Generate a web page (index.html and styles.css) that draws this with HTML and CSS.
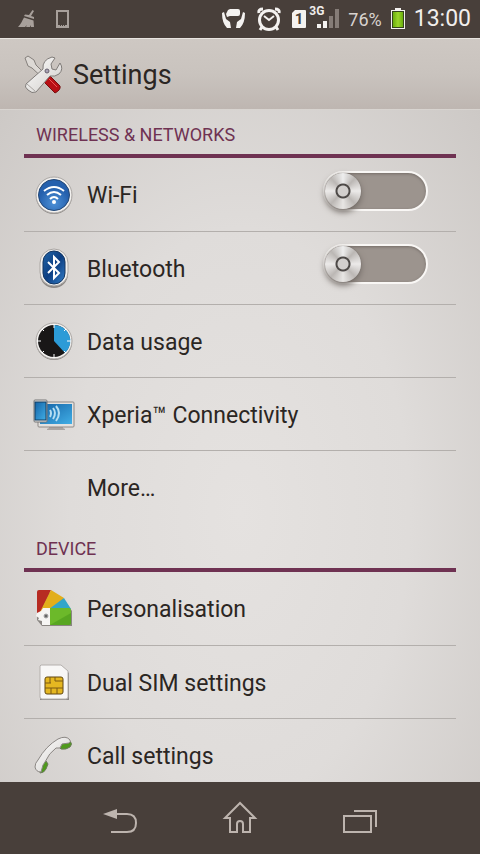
FILE: index.html
```html
<!DOCTYPE html>
<html lang="en">
<head>
    <meta charset="UTF-8">
    <meta name="viewport" content="width=device-width, initial-scale=1.0">
    <title>Settings</title>
    <link rel="stylesheet" href="styles.css">
</head>
<body>
    <div class="status-bar">
        <svg class="broom" width="18" height="18" viewBox="0 0 18 18">
            <path d="M14.500 0l1.500 1-3 5 3 1v2L6 6l1-1.500 4 .5z"/>
            <path d="M6 7.500l9.500 3L16 17h-3v-2l-1 2H8l1-2-2 2H0c3-3 4-6 6-9.500z"/>
        </svg>
        <svg width="14" height="18" viewBox="0 0 14 18">
            <path class="phone-outline" d="M1 1h11v16H1z"/>
            <path class="broom" d="M2 15h2v1H2zM5 15h1v1H5zM7 15h1v1H7zM9 15h2v1H9z"/>
        </svg>
        <div class="status-right">
            <svg width="26" height="20" viewBox="0 0 26 20">
                <path d="M7 1l2-1h8q2 0 2 2v3q0 2-2 2H9L6 8 5 5z"/>
                <path d="M1 4l2-1 2 7 4 3 1 6H6Q1 14 1 4zM24 4l-2-1-2 7-4 3-1 6h4q5-5 5-15z"/>
            </svg>
            <svg class="alarm" width="24" height="25" viewBox="0 0 24 25">
                <circle cx="12" cy="13" r="9.500"/>
                <path d="M2 6q-1-4 4-4M22 6q1-4-4-4M5 20l-2 3M19 20l2 3"/>
                <path class="hands" d="M7 9l5 4 5-4"/>
            </svg>
            <svg width="16" height="20" viewBox="0 0 16 20">
                <path d="M4 1h10q1 0 1 1v16q0 1-1 1H2q-1 0-1-1V4z"/>
                <text class="digit" x="8" y="15" text-anchor="middle">1</text>
            </svg>
            <div class="signal">
                <span>3G</span>
                <svg width="24" height="20" viewBox="0 0 24 20">
                    <path d="M1 15h4v4H1zM7 12h4v7H7z"/>
                    <path class="weak" d="M13 7h4v12h-4zM19 0h4v19h-4z"/>
                </svg>
            </div>
            <span class="percent">76%</span>
            <svg width="16" height="22" viewBox="0 0 16 22">
                <defs>
                    <linearGradient id="charge"><stop stop-color="#6aae0c"/><stop offset=".5" stop-color="#9bd72a"/><stop offset="1" stop-color="#6aae0c"/></linearGradient>
                </defs>
                <path d="M5 0h6v2h4v19H1V2h4z"/>
                <path fill="#35451c" d="M2 3h12v17H2z"/>
                <path fill="url(#charge)" d="M3 4h10v15H3z"/>
            </svg>
            <span class="clock">13:00</span>
        </div>
    </div>

    <header class="title-bar">
        <svg width="40" height="40" viewBox="0 0 40 40">
            <defs>
                <linearGradient id="steel" x1="0" y1="0" x2="1" y2="1"><stop stop-color="#fff"/><stop offset="1" stop-color="#cfccc9"/></linearGradient>
            </defs>
            <path fill="#ddd9d5" stroke="#85807c" d="M2 3l3-2 6 4 2 5 12 12-3 3L9 13l-4-2z"/>
            <path fill="#b80f14" stroke="#770f10" d="M21 27l6-6 10 10q1 4-5 7z"/>
            <path stroke="#ed5553" d="M26 24l8 8"/>
            <path fill="url(#steel)" stroke="#807c79" d="M20 14q-1-9 9-12l3 1-4 6 1 5 4 1 4-7q4 6-1 11-4 3-9 2L13 37q-4 2-8-2-4-3-2-6z"/>
            <path fill="none" stroke="#aaa5a2" d="M4 29l8 7"/>
            <circle cx="24" cy="16" r="2" fill="#a9a3b5" stroke="#65606d"/>
        </svg>
        <h1>Settings</h1>
    </header>

    <main class="settings">
        <section>
            <h2>Wireless &amp; networks</h2>
            <ul>
                <li class="row">
                    <svg width="42" height="42" viewBox="0 0 42 42">
                        <defs>
                            <radialGradient id="blue" cy=".75"><stop stop-color="#4d91d7"/><stop offset="1" stop-color="#2560ad"/></radialGradient>
                        </defs>
                        <circle cx="21" cy="22" r="18" fill="#8d8986"/>
                        <circle cx="21" cy="21" r="18" fill="#f2f0ee" stroke="#aaa6a3"/>
                        <circle cx="21" cy="21" r="15.500" fill="url(#blue)" stroke="#234775"/>
                        <g class="wave">
                            <path d="M11 17q10-8 20 0M14 21q7-6 14 0M17 25q4-4 8 0"/>
                        </g>
                        <circle cx="21" cy="28" r="2" fill="#fff"/>
                    </svg>
                    <label for="wifi">Wi-Fi</label>
                    <input type="checkbox" class="switch" id="wifi">
                </li>
                <li class="row">
                    <svg width="42" height="42" viewBox="0 0 42 42">
                        <defs>
                            <linearGradient id="navy" x1="0" x2="1" y2="1"><stop stop-color="#2265a8"/><stop offset=".5" stop-color="#0c3e82"/><stop offset="1" stop-color="#3580ca"/></linearGradient>
                        </defs>
                        <rect x="7" y="4" width="28" height="37" rx="14" fill="#8d8986"/>
                        <rect x="7" y="2" width="28" height="37" rx="14" fill="#f2f0ee" stroke="#aaa6a3"/>
                        <rect x="10" y="4" width="22" height="33" rx="11" fill="url(#navy)" stroke="#123561"/>
                        <path fill="none" stroke="#fff" stroke-width="2" d="M15 15l11 11-5 5V10l5 5-11 11"/>
                    </svg>
                    <label for="bluetooth">Bluetooth</label>
                    <input type="checkbox" class="switch" id="bluetooth">
                </li>
                <li>
                    <a class="row" href="#data">
                        <svg width="42" height="42" viewBox="0 0 42 42">
                            <circle cx="21" cy="22" r="18" fill="#8d8986"/>
                            <circle cx="21" cy="21" r="18" fill="#f2f0ee" stroke="#aaa6a3"/>
                            <circle cx="21" cy="21" r="16" fill="#191717"/>
                            <path fill="#2c9bd7" d="M21 21V5a16 16 0 0 1 11 28z"/>
                            <path stroke="#fff" d="M21 4v4M21 34v4M4 21h4M34 21h4M9 9l2 2M33 9l-2 2M9 33l2-2M33 33l-2-2"/>
                        </svg>
                        Data usage
                    </a>
                </li>
                <li>
                    <a class="row" href="#connectivity">
                        <svg width="42" height="42" viewBox="0 0 42 42">
                            <defs>
                                <linearGradient id="screen" x2="1" y2="1"><stop stop-color="#1463a7"/><stop offset="1" stop-color="#41aee5"/></linearGradient>
                            </defs>
                            <path fill="#aaa5a2" d="M16 32h14v3l2 1v1H14v-1l2-1z"/>
                            <rect x="5" y="9" width="36" height="25" rx="1" fill="#e3e1df" stroke="#8d8986"/>
                            <rect x="7" y="11" width="32" height="20" fill="url(#screen)"/>
                            <rect x="1" y="7" width="13" height="22" rx="1" fill="#e5e3e2" stroke="#777"/>
                            <rect x="2" y="9" width="11" height="18" fill="url(#screen)" stroke="#123e63"/>
                            <g class="wave thin">
                                <path d="M17 17q2 3 0 7M20 15q4 5 0 11M23 13q6 7 0 15"/>
                            </g>
                        </svg>
                        Xperia™ Connectivity
                    </a>
                </li>
                <li>
                    <a class="row no-icon" href="#more">More…</a>
                </li>
            </ul>
        </section>

        <section>
            <h2>Device</h2>
            <ul>
                <li>
                    <a class="row" href="#personalisation">
                        <svg width="42" height="42" viewBox="0 0 42 42">
                            <path fill="#8a8682" d="M4 6h14l12 5 9 13v15H9l-5-6z"/>
                            <path fill="#b72b22" d="M4 5q0-2 2-2h12L8 24l-4 4z"/>
                            <path fill="#e2ae1b" d="M18 3l13 8-17 14H7z"/>
                            <path fill="#32a6c9" d="M31 11l7 11-21 4-5-1z"/>
                            <path fill="#6cb92a" d="M17 21h19q2 0 2 3v12q0 2-2 2H17z"/>
                            <path fill="#3d8a13" d="M17 38l21-12v10q0 2-2 2z" opacity=".4"/>
                            <path fill="#f6f5f3" d="M4 26l4-2 2-3h7v17H9v-4l-4-1 1-2-3-2z"/>
                            <circle cx="13" cy="29" r="2" fill="#666" stroke="#aaa"/>
                        </svg>
                        Personalisation
                    </a>
                </li>
                <li>
                    <a class="row" href="#dual-sim">
                        <svg width="42" height="42" viewBox="0 0 42 42">
                            <path fill="#8d8986" d="M7 6h22l7 6v27H7z"/>
                            <path fill="#f8f7f6" stroke="#b4b0ad" d="M8 4h20l7 6v26q0 2-2 2H9q-2 0-2-2V5z"/>
                            <rect x="12" y="16" width="18" height="17" rx="2" fill="#e5b721" stroke="#614710"/>
                            <path fill="none" stroke="#7a5914" d="M12 22h6M17 16v6M22 16v4h8M12 27h18M18 27v6M24 27v6"/>
                        </svg>
                        Dual SIM settings
                    </a>
                </li>
                <li>
                    <a class="row" href="#call">
                        <svg width="42" height="42" viewBox="0 0 42 42">
                            <path fill="#4f9a1c" stroke="#6c7a5a" d="M27 14l1-4 9-3q3 3 0 6-4 3-9 2zM7 39l2-10 4-2 2 3-2 5q-2 4-6 4z"/>
                            <path fill="url(#steel)" stroke="#8b8784" d="M2 33q0-4 3-7Q13 12 25 5q8-4 12 1 1 2-1 3l-7 1-2 4-4 0Q16 19 12 28l-2 3-2 7q-5 0-6-5z"/>
                        </svg>
                        Call settings
                    </a>
                </li>
            </ul>
        </section>
    </main>

    <nav class="nav-bar">
        <button type="button" aria-label="Back">
            <svg width="36" height="36" viewBox="0 0 36 36">
                <path class="solid" d="M1 14l14-5v10z"/>
                <path d="M14 14h11q9 0 9 9t-9 9H9"/>
            </svg>
        </button>
        <button type="button" aria-label="Home">
            <svg width="36" height="36" viewBox="0 0 36 36">
                <path d="M18 3L3 18h5v14h7v-8q0-3 3-3t3 3v8h7V18h5z"/>
            </svg>
        </button>
        <button type="button" aria-label="Recent apps">
            <svg width="36" height="36" viewBox="0 0 36 36">
                <path d="M2 16h27v16H2zM12 11h22v16"/>
            </svg>
        </button>
    </nav>
</body>
</html>
```

FILE: styles.css
```css
* {
    box-sizing: border-box;
}
body {
    font-family: Roboto, "Liberation Sans", sans-serif;
    margin: 0;
    height: 100vh;
    display: flex;
    flex-direction: column;
    background-color: #483f3a;
    color: #2b2623;
}
svg {
    flex-shrink: 0;
    display: block;
}
.status-bar {
    height: 38px;
    flex-shrink: 0;
    display: flex;
    align-items: center;
    gap: 20px;
    padding: 0 9px 0 18px;
    color: #f1eeec;
    fill: #f4f2f0;
}
.broom {
    fill: #a8a09b;
}
.phone-outline {
    fill: none;
    stroke: #a8a09b;
    stroke-width: 2;
}
.status-right {
    display: flex;
    align-items: center;
    gap: 8px;
    margin-left: auto;
}
.alarm {
    margin: 0 2px;
    fill: none;
    stroke: #f4f2f0;
    stroke-width: 3;
}
.alarm .hands {
    stroke-width: 2;
}
.digit {
    fill: #483f3a;
    font-size: 15px;
    font-weight: bold;
}
.signal {
    position: relative;
    padding-left: 1px;
}
.signal span {
    position: absolute;
    left: -6px;
    top: -4px;
    font-size: 12px;
    line-height: 12px;
    font-weight: bold;
}
.signal .weak {
    fill: #857c77;
}
.percent {
    font-size: 18px;
    color: #d8d3cf;
}
.clock {
    font-size: 23px;
    line-height: 38px;
}
.title-bar {
    height: 72px;
    flex-shrink: 0;
    display: flex;
    align-items: center;
    gap: 10px;
    padding: 2px 23px 0;
    border-top: 1px solid #e8e4e0;
    border-bottom: 1px solid #d8d4d0;
    background: linear-gradient(#cec8c3, #c9c3be 50%, #beb6b1);
}
.title-bar h1 {
    margin: 0;
    font-size: 27px;
    font-weight: normal;
}
.settings {
    flex: 1;
    min-height: 0;
    overflow: auto;
    scrollbar-width: none;
    padding: 0 24px;
    background: radial-gradient(ellipse at 50% 60%, #e5e2e0, #dfdcda 50%, #cdc9c6);
}
.settings h2 {
    margin: 0;
    height: 48px;
    padding-left: 12px;
    border-bottom: 4px solid #6f3252;
    color: #6f3252;
    font-size: 18px;
    line-height: 49px;
    font-weight: normal;
    text-transform: uppercase;
}
.settings ul {
    margin: 0 0 1px;
    padding: 0;
    list-style: none;
}
.settings li + li {
    border-top: 1px solid #b3afac;
}
.row {
    height: 72px;
    display: flex;
    align-items: center;
    gap: 12px;
    padding: 2px 28px 0 9px;
    font-size: 23px;
    color: inherit;
    text-decoration: none;
}
.settings li:first-child,
.settings li + li.row {
    height: 73px;
}
.row svg {
    margin-bottom: 2px;
}
.no-icon {
    padding-left: 63px;
}
.wave {
    fill: none;
    stroke: #fff;
    stroke-width: 2;
}
.thin {
    stroke: #b6def2;
}
.switch {
    appearance: none;
    width: 105px;
    height: 40px;
    margin: 0 0 10px auto;
    border: 2px solid #f9f7f5;
    border-radius: 20px;
    background-color: #9c948e;
    box-shadow: inset 0 1px 3px #746c67;
}
.switch::before {
    content: "";
    display: block;
    width: 36px;
    height: 36px;
    border-radius: 50%;
    background:
        radial-gradient(circle, #d2cfcd 5px, #4d4947 6px, #4d4947 7px, transparent 8px),
        conic-gradient(#eee, #bbb7b4 12%, #eceae9 25%, #bcb8b5 38%, #e8e6e4 50%, #bbb7b4 62%, #eceae9 75%, #bbb7b4 88%, #eee);
    box-shadow: 0 3px 6px #6f6863, 0 0 1px #5e5854;
}
.switch:checked::before {
    margin-left: auto;
}
.nav-bar {
    height: 72px;
    flex-shrink: 0;
    display: grid;
    grid-template-columns: repeat(3, 1fr);
    padding: 0 12.5%;
}
.nav-bar button {
    display: flex;
    align-items: center;
    justify-content: center;
    padding: 0;
    border: none;
    background: none;
    cursor: pointer;
}
.nav-bar svg {
    fill: none;
    stroke: #bdb4ae;
    stroke-width: 2;
}
.nav-bar .solid {
    fill: #bdb4ae;
    stroke: none;
}
```
